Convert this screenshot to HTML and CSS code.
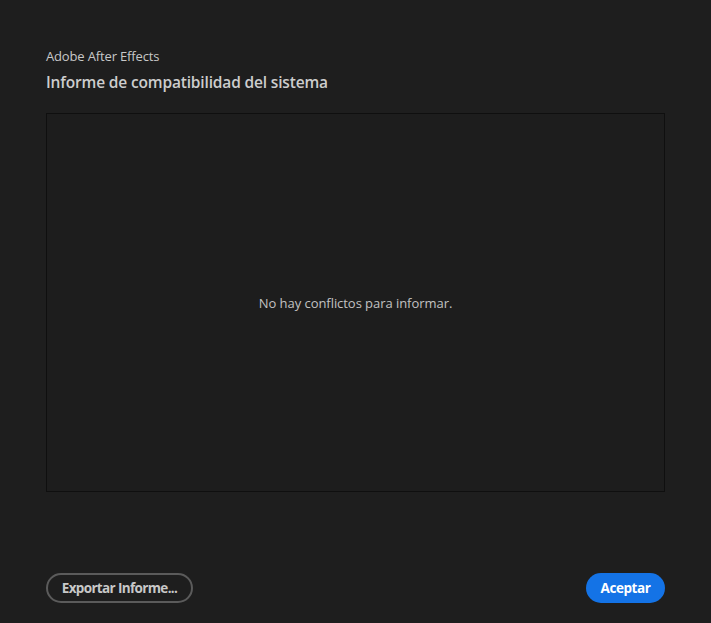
FILE: index.html
```html
<!DOCTYPE html>
<html lang="es">
<head>
<meta charset="utf-8">
<link rel="stylesheet" href="styles.css">
</head>
<body>
<div class="dialog">
  <header class="head">
    <div class="app">Adobe After Effects</div>
    <h1 class="title">Informe de compatibilidad del sistema</h1>
  </header>
  <div class="report">
    <p class="empty">No hay conflictos para informar.</p>
  </div>
  <footer class="actions">
    <button class="btn btn-secondary">Exportar Informe...</button>
    <button class="btn btn-primary">Aceptar</button>
  </footer>
</div>
</body>
</html>
```
FILE: styles.css
```css
html, body {
  margin: 0;
  padding: 0;
  background: #1e1e1e;
  width: 711px;
  height: 623px;
  overflow: hidden;
}
.dialog {
  font-family: "Open Sans", "Noto Sans", sans-serif;
  color: #c6c6c6;
  padding: 47px 46px 0 46px;
  display: flex;
  flex-direction: column;
  height: 623px;
  box-sizing: border-box;
}
.head {
  display: flex;
  flex-direction: column;
}
.app {
  font-size: 13px;
  line-height: 18px;
  letter-spacing: -0.15px;
  color: #c8c8c8;
}
.title {
  margin: 6px 0 0 0;
  font-size: 15.5px;
  line-height: 22px;
  font-weight: 600;
  letter-spacing: -0.16px;
  color: #cdcdcd;
}
.report {
  margin-top: 20px;
  width: 619px;
  height: 379px;
  box-sizing: border-box;
  border: 1px solid #0f0f0f;
  background: #1d1d1d;
  display: flex;
  align-items: center;
  justify-content: center;
}
.empty {
  margin: 0;
  font-size: 13px;
  letter-spacing: -0.05px;
  color: #c2c2c2;
  position: relative;
  top: 0px;
}
.actions {
  margin-top: 81px;
  display: flex;
  justify-content: space-between;
  width: 619px;
}
.btn {
  font-family: "Open Sans", "Noto Sans", sans-serif;
  font-weight: 700;
  font-size: 13.5px;
  height: 30px;
  border-radius: 15px;
  box-sizing: border-box;
  cursor: pointer;
}
.btn-secondary {
  width: 147px;
  background: transparent;
  border: 2px solid #5b5b5b;
  color: #c8c8c8;
  letter-spacing: -0.65px;
}
.btn-primary {
  width: 79px;
  background: #1473e6;
  border: none;
  color: #ffffff;
  letter-spacing: -0.45px;
}
```
